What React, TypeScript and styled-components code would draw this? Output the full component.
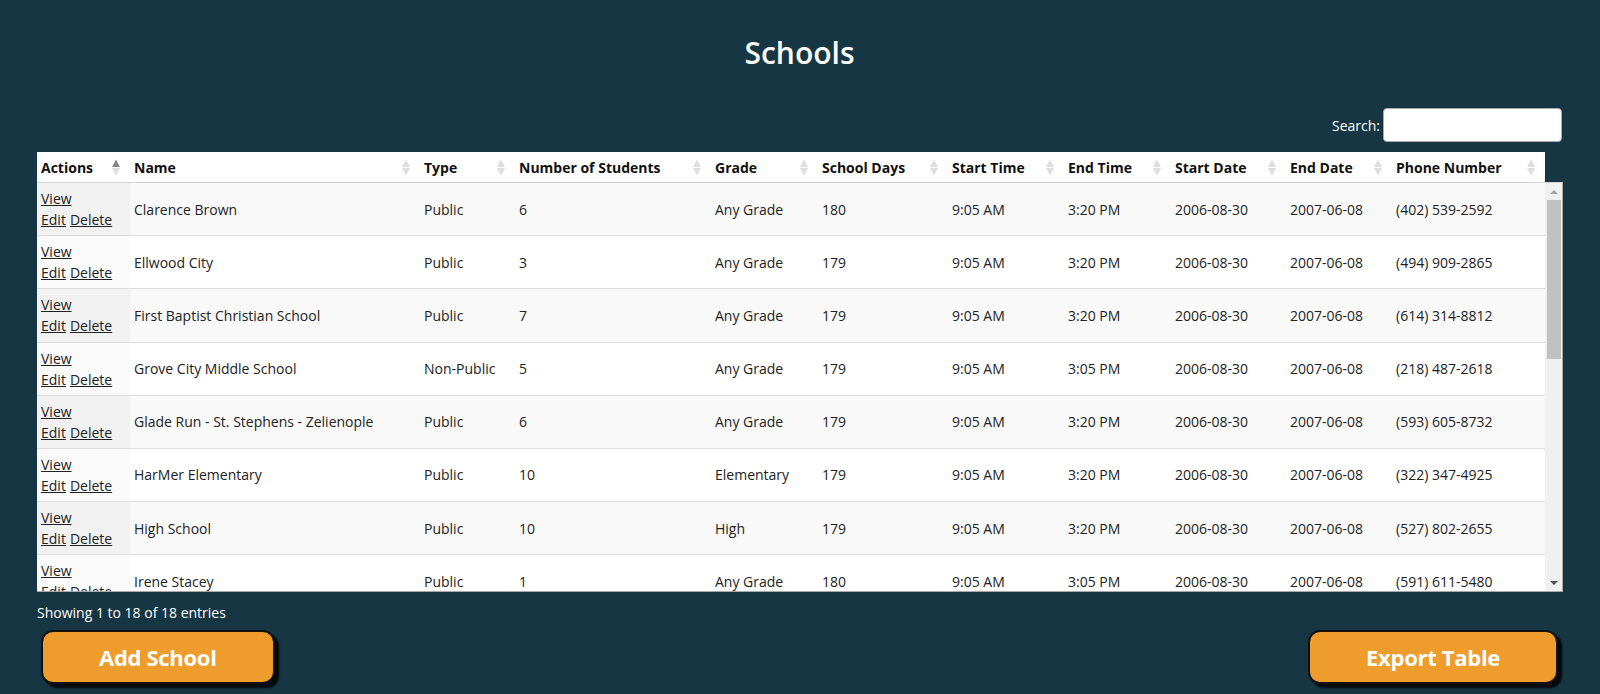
import React from "react";
import styled, { createGlobalStyle } from "styled-components";

const Global = createGlobalStyle`
  html, body { margin: 0; padding: 0; background: #163644; }
  body { font-family: "Open Sans", "Noto Sans", "DejaVu Sans", sans-serif; }
  * { box-sizing: border-box; }
`;

const Page = styled.div`
  min-height: 694px;
  padding: 0 38px 0 37px;
  color: #fff;
`;

const Title = styled.h1`
  margin: 0;
  padding-top: 33px;
  text-align: center;
  font-size: 30px;
  font-weight: 600;
  line-height: 40px;
  color: #fff;
`;

const SearchBar = styled.div`
  margin-top: 35px;
  display: flex;
  justify-content: flex-end;
  align-items: center;
  gap: 3px;
  font-size: 14px;
`;

const SearchInput = styled.input`
  width: 179px;
  height: 34px;
  border: 1px solid #aaa;
  border-radius: 4px;
  background: #fff;
  padding: 0 6px;
`;

const TableWrap = styled.div`
  margin-top: 10px;
`;

const HeadBox = styled.div`
  width: 1508px;
  background: #fff;
`;

const Table = styled.table`
  width: 1508px;
  table-layout: fixed;
  border-collapse: collapse;
  color: #222;
  font-size: 14px;
`;

const Th = styled.th`
  height: 30px;
  padding: 0 10px 0 4px;
  text-align: left;
  font-weight: 700;
  color: #111;
  vertical-align: middle;
`;

const ThInner = styled.div`
  display: flex;
  align-items: center;
  justify-content: space-between;
  white-space: nowrap;
`;

const ScrollBody = styled.div`
  display: flex;
  width: 1526px;
  height: 410px;
  background: #fff;
  border-top: 1px solid #d4d4d4;
  border-right: 1px solid #a8a8a8;
  border-bottom: 1px solid #a8a8a8;
`;

const Viewport = styled.div`
  width: 1508px;
  height: 408px;
  overflow: hidden;
`;

const ScrollTrack = styled.div`
  width: 17px;
  height: 408px;
  background: #f0f0f0;
  display: flex;
  flex-direction: column;
`;

const ScrollArrow = styled.div`
  height: 17px;
  flex: none;
  display: flex;
  align-items: center;
  justify-content: center;
`;

const ScrollThumb = styled.div<{ $size: number }>`
  height: ${(p) => p.$size}px;
  margin: 0 1px 0 2px;
  background: #c1c1c1;
  flex: none;
`;

const Tr = styled.tr<{ $odd: boolean }>`
  background: ${(p) => (p.$odd ? "#f9f9f9" : "#fff")};
`;

const Td = styled.td<{ $sorted?: boolean; $odd?: boolean }>`
  padding: 5px 4px;
  line-height: 21.1px;
  border-bottom: 1px solid #ddd;
  vertical-align: middle;
  white-space: nowrap;
  overflow: hidden;
  background: ${(p) => (p.$sorted ? (p.$odd ? "#f1f1f1" : "#fafafa") : "transparent")};
`;

const ActionLink = styled.a`
  color: #222;
  text-decoration: underline;
  cursor: pointer;
`;

const ActionLine = styled.div`
  display: flex;
  gap: 4px;
`;

const Info = styled.div`
  margin-top: 11px;
  font-size: 14px;
  line-height: 20px;
  color: #fff;
`;

const ButtonRow = styled.div`
  margin-top: 7px;
  display: flex;
  justify-content: space-between;
  padding: 0 4px;
`;

const OrangeButton = styled.button`
  height: 54px;
  padding: 0 56px;
  border: 2px solid #111;
  border-radius: 12px;
  background: #ee9c2c;
  color: #fff;
  font-family: "Open Sans", "Noto Sans", sans-serif;
  font-size: 22px;
  font-weight: 700;
  letter-spacing: -0.3px;
  box-shadow: 4px 4px 2px rgba(0, 0, 0, 0.85);
  cursor: pointer;
`;

const SortIcon = ({ asc }: { asc?: boolean }) => (
  <svg width="8" height="17" viewBox="0 0 8 17" style={{ flex: "none" }}>
    <polygon points="0,8 4,0.5 8,8" fill={asc ? "#858585" : "#dedede"} />
    <polygon points="0,9 4,16.5 8,9" fill="#dedede" />
  </svg>
);

const ArrowIcon = ({ up, color }: { up?: boolean; color: string }) => (
  <svg width="8" height="4" viewBox="0 0 8 4">
    <polygon points={up ? "0,4 4,0 8,4" : "0,0 4,4 8,0"} fill={color} />
  </svg>
);

const columns = [
  { label: "Actions", w: 93 },
  { label: "Name", w: 290 },
  { label: "Type", w: 95 },
  { label: "Number of Students", w: 196 },
  { label: "Grade", w: 107 },
  { label: "School Days", w: 130 },
  { label: "Start Time", w: 116 },
  { label: "End Time", w: 107 },
  { label: "Start Date", w: 115 },
  { label: "End Date", w: 106 },
  { label: "Phone Number", w: 153 },
];

type Row = [string, string, string, string, string, string, string, string];

const rows: Row[] = [
  ["Clarence Brown", "Public", "6", "Any Grade", "180", "9:05 AM", "3:20 PM", "(402) 539-2592"],
  ["Ellwood City", "Public", "3", "Any Grade", "179", "9:05 AM", "3:20 PM", "(494) 909-2865"],
  ["First Baptist Christian School", "Public", "7", "Any Grade", "179", "9:05 AM", "3:20 PM", "(614) 314-8812"],
  ["Grove City Middle School", "Non-Public", "5", "Any Grade", "179", "9:05 AM", "3:05 PM", "(218) 487-2618"],
  ["Glade Run - St. Stephens - Zelienople", "Public", "6", "Any Grade", "179", "9:05 AM", "3:20 PM", "(593) 605-8732"],
  ["HarMer Elementary", "Public", "10", "Elementary", "179", "9:05 AM", "3:20 PM", "(322) 347-4925"],
  ["High School", "Public", "10", "High", "179", "9:05 AM", "3:20 PM", "(527) 802-2655"],
  ["Irene Stacey", "Public", "1", "Any Grade", "180", "9:05 AM", "3:05 PM", "(591) 611-5480"],
  ["Jackson Center", "Public", "4", "Any Grade", "179", "9:05 AM", "3:20 PM", "(412) 555-0134"],
  ["Knoch High School", "Public", "8", "High", "180", "9:05 AM", "3:20 PM", "(724) 555-0187"],
  ["Laurel Elementary", "Public", "2", "Elementary", "179", "9:05 AM", "3:05 PM", "(724) 555-0121"],
  ["Mars Area", "Public", "9", "Any Grade", "179", "9:05 AM", "3:20 PM", "(724) 555-0162"],
  ["Neshannock", "Public", "5", "Any Grade", "180", "9:05 AM", "3:20 PM", "(724) 555-0145"],
  ["Oakview Christian", "Non-Public", "3", "Any Grade", "179", "9:05 AM", "3:05 PM", "(724) 555-0198"],
  ["Portersville", "Public", "6", "Any Grade", "179", "9:05 AM", "3:20 PM", "(724) 555-0173"],
  ["Riverside", "Public", "7", "Any Grade", "180", "9:05 AM", "3:20 PM", "(724) 555-0109"],
  ["Slippery Rock", "Public", "4", "Any Grade", "179", "9:05 AM", "3:20 PM", "(724) 555-0156"],
  ["Union Area", "Public", "2", "Elementary", "179", "9:05 AM", "3:05 PM", "(724) 555-0118"],
];

const ColGroup = () => (
  <colgroup>
    {columns.map((c) => (
      <col key={c.label} style={{ width: c.w }} />
    ))}
  </colgroup>
);

const VIEW_H = 408;
const ROW_H = 53.2;
const TRACK_H = VIEW_H - 34;
const thumbSize = Math.round((VIEW_H / (rows.length * ROW_H)) * TRACK_H);

export default function App() {
  return (
    <>
      <Global />
      <Page>
        <Title>Schools</Title>
        <SearchBar>
          <label>Search:</label>
          <SearchInput type="search" />
        </SearchBar>
        <TableWrap>
          <HeadBox>
            <Table>
              <ColGroup />
              <thead>
                <tr>
                  {columns.map((c, i) => (
                    <Th key={c.label}>
                      <ThInner>
                        <span>{c.label}</span>
                        <SortIcon asc={i === 0} />
                      </ThInner>
                    </Th>
                  ))}
                </tr>
              </thead>
            </Table>
          </HeadBox>
          <ScrollBody>
            <Viewport>
              <Table>
                <ColGroup />
                <tbody>
                  {rows.map((r, i) => {
                    const odd = i % 2 === 0;
                    return (
                      <Tr key={r[0]} $odd={odd}>
                        <Td $sorted $odd={odd}>
                          <ActionLine>
                            <ActionLink>View</ActionLink>
                          </ActionLine>
                          <ActionLine>
                            <ActionLink>Edit</ActionLink>
                            <ActionLink>Delete</ActionLink>
                          </ActionLine>
                        </Td>
                        <Td>{r[0]}</Td>
                        <Td>{r[1]}</Td>
                        <Td>{r[2]}</Td>
                        <Td>{r[3]}</Td>
                        <Td>{r[4]}</Td>
                        <Td>{r[5]}</Td>
                        <Td>{r[6]}</Td>
                        <Td>2006-08-30</Td>
                        <Td>2007-06-08</Td>
                        <Td>{r[7]}</Td>
                      </Tr>
                    );
                  })}
                </tbody>
              </Table>
            </Viewport>
            <ScrollTrack>
              <ScrollArrow>
                <ArrowIcon up color="#a3a3a3" />
              </ScrollArrow>
              <ScrollThumb $size={thumbSize} />
              <div style={{ flex: 1 }} />
              <ScrollArrow>
                <ArrowIcon color="#505050" />
              </ScrollArrow>
            </ScrollTrack>
          </ScrollBody>
        </TableWrap>
        <Info>Showing 1 to 18 of 18 entries</Info>
        <ButtonRow>
          <OrangeButton>Add School</OrangeButton>
          <OrangeButton>Export Table</OrangeButton>
        </ButtonRow>
      </Page>
    </>
  );
}
